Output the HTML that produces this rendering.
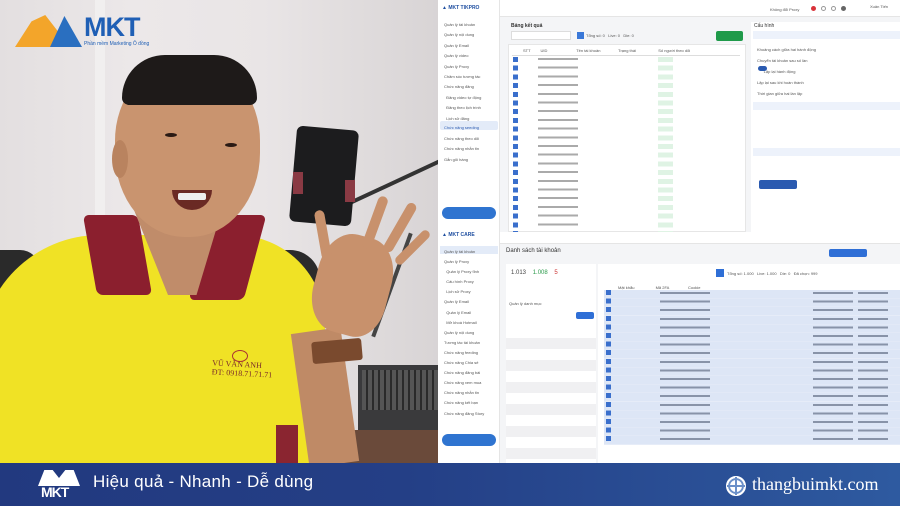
<!DOCTYPE html>
<html><head><meta charset="utf-8"><style>
*{margin:0;padding:0;box-sizing:border-box}
body{width:900px;height:506px;overflow:hidden;position:relative;font-family:"Liberation Sans","Noto Sans CJK SC",sans-serif;background:#e9e5e6}
.a{position:absolute}
.t{position:absolute;font-size:4px;color:#555;white-space:nowrap}
</style></head><body>
<!-- photo background -->
<div class="a" style="left:0;top:0;width:440px;height:465px;background:linear-gradient(90deg,#e3dfe0 0,#ece8e9 30%,#e9e5e6 60%,#d8d4d5 100%)"></div>
<div class="a" style="left:95px;top:0;width:10px;height:250px;background:#f1efef"></div>
<!-- chair -->
<div class="a" style="left:0;top:250px;width:40px;height:40px;background:#2a2a2a;border-radius:0 20px 0 0"></div>
<div class="a" style="left:230px;top:250px;width:90px;height:70px;background:#2b2b2b;border-radius:30px 30px 0 0"></div>
<!-- mic arm -->
<div class="a" style="left:340px;top:180px;width:110px;height:4px;background:#333;transform:rotate(-25deg)"></div>
<div class="a" style="left:390px;top:230px;width:4px;height:110px;background:#444;transform:rotate(20deg)"></div>
<!-- phone -->
<div class="a" style="left:293px;top:128px;width:62px;height:96px;background:#1c1c1e;border-radius:6px;transform:rotate(5deg)"></div>
<div class="a" style="left:293px;top:172px;width:10px;height:22px;background:#8a3a44"></div>
<div class="a" style="left:345px;top:180px;width:10px;height:22px;background:#8a3a44"></div>
<!-- keyboard / desk -->
<div class="a" style="left:358px;top:365px;width:82px;height:100px;background:#3a3a3c"></div>
<div class="a" style="left:362px;top:370px;width:78px;height:40px;background:repeating-linear-gradient(90deg,#555 0 4px,#2a2a2a 4px 6px)"></div>
<div class="a" style="left:340px;top:430px;width:100px;height:35px;background:#6a4a3a"></div>
<!-- shirt -->
<div class="a" style="left:-20px;top:235px;width:345px;height:240px;background:#f0e225;border-radius:120px 90px 0 0"></div>
<div class="a" style="left:276px;top:425px;width:22px;height:40px;background:#8a2530"></div>
<!-- collar -->
<div class="a" style="left:90px;top:215px;width:55px;height:80px;background:#8b1f2e;transform:skewX(10deg);border-radius:6px"></div>
<div class="a" style="left:200px;top:215px;width:55px;height:85px;background:#8b1f2e;transform:skewX(-15deg);border-radius:6px"></div>
<!-- neck -->
<div class="a" style="left:130px;top:200px;width:95px;height:95px;background:#c08c6a;clip-path:polygon(0 0,100% 0,70% 100%,40% 100%)"></div>
<!-- head -->
<div class="a" style="left:115px;top:62px;width:145px;height:175px;background:#c9946f;border-radius:45% 45% 48% 48%"></div>
<div class="a" style="left:122px;top:55px;width:135px;height:50px;background:#1e1a19;border-radius:60px 60px 10px 10px"></div>
<div class="a" style="left:112px;top:140px;width:16px;height:38px;background:#b9835f;border-radius:50%"></div>
<div class="a" style="left:172px;top:190px;width:40px;height:20px;background:#6a2a24;border-radius:0 0 20px 20px"></div>
<div class="a" style="left:178px;top:193px;width:28px;height:7px;background:#eee;border-radius:2px"></div>
<div class="a" style="left:165px;top:133px;width:12px;height:4px;background:#2a1a14;border-radius:50%"></div>
<div class="a" style="left:225px;top:143px;width:12px;height:4px;background:#2a1a14;border-radius:50%"></div>
<!-- hand & arm -->
<div class="a" style="left:300px;top:330px;width:50px;height:135px;background:#bf8a66;transform:rotate(-8deg)"></div>
<div class="a" style="left:315px;top:235px;width:75px;height:100px;background:#c8916c;border-radius:40% 40% 35% 40%;transform:rotate(15deg)"></div>
<div class="a" style="left:318px;top:210px;width:10px;height:50px;background:#c8916c;border-radius:5px;transform:rotate(-10deg)"></div>
<div class="a" style="left:370px;top:195px;width:10px;height:55px;background:#c8916c;border-radius:5px;transform:rotate(20deg)"></div>
<div class="a" style="left:395px;top:200px;width:10px;height:55px;background:#c8916c;border-radius:5px;transform:rotate(30deg)"></div>
<div class="a" style="left:408px;top:225px;width:9px;height:45px;background:#c8916c;border-radius:5px;transform:rotate(45deg)"></div>
<div class="a" style="left:312px;top:340px;width:50px;height:22px;background:#7a4a2e;border-radius:3px;transform:rotate(-5deg)"></div>
<!-- shirt logo text -->
<div class="a" style="left:212px;top:360px;font-size:8px;color:#7a2a2a;font-family:'Liberation Serif',serif;transform:rotate(3deg)">VŨ VĂN ANH<br>ĐT: 0918.71.71.71</div>
<div class="a" style="left:232px;top:350px;width:16px;height:12px;border:1px solid #a33;border-radius:50%"></div>
<!-- top logo -->
<div class="a" style="left:15px;top:15px;width:55px;height:32px;background:#f3a52a;clip-path:polygon(0 100%,30% 20%,55% 0,100% 100%)"></div>
<div class="a" style="left:50px;top:16px;width:32px;height:31px;background:#2a6fc0;clip-path:polygon(0 100%,45% 0,100% 100%)"></div>
<div class="a" style="left:84px;top:12px;font:bold 27px 'Liberation Sans',sans-serif;color:#1f5fb5;letter-spacing:-1px">MKT</div>
<div class="a" style="left:84px;top:41px;font-size:5px;color:#1f5fb5">Phần mềm Marketing Ô đồng</div>

<!-- TOP SOFTWARE -->
<div class="a" style="left:438px;top:0;width:462px;height:232px;background:#f4f5f7;overflow:hidden">
 <div class="a" style="left:0;top:0;width:62px;height:232px;background:#fff;border-right:1px solid #e5e5e5"></div>
 <div class="a" style="left:62px;top:0;width:400px;height:17px;background:#fff;border-bottom:1px solid #e5e5e5"></div>
 <div class="a" style="left:4px;top:5px;font:bold 5px 'Liberation Sans';color:#1f4fa0">▲ MKT TIKPRO</div>
 <div class="t" style="left:6px;top:20px;line-height:10.4px">Quản lý tài khoản<br>Quản lý nội dung<br>Quản lý Email<br>Quản lý video<br>Quản lý Proxy<br>Chăm sóc tương tác<br>Chức năng đăng<br>&nbsp; Đăng video tự động<br>&nbsp; Đăng theo lịch trình<br>&nbsp; Lịch sử đăng</div>
 <div class="a" style="left:2px;top:121px;width:58px;height:9px;background:#e3ebf8;border-radius:2px"></div>
 <div class="t" style="left:6px;top:123px;line-height:10.4px;color:#2a5ab0">Chức năng seeding</div>
 <div class="t" style="left:6px;top:134px;line-height:10.4px">Chức năng theo dõi<br>Chức năng nhắn tin<br>Gắn giỏ hàng</div>
 <div class="a" style="left:4px;top:207px;width:54px;height:12px;background:#2f74d0;border-radius:7px"></div>
 <div class="t" style="left:332px;top:7px">Không đổi Proxy</div>
 <div class="a" style="left:373px;top:6px;width:5px;height:5px;background:#d9333a;border-radius:50%"></div>
 <div class="a" style="left:383px;top:6px;width:5px;height:5px;border:1px solid #999;border-radius:50%"></div>
 <div class="a" style="left:393px;top:6px;width:5px;height:5px;border:1px solid #999;border-radius:50%"></div>
 <div class="a" style="left:403px;top:6px;width:5px;height:5px;background:#666;border-radius:50%"></div>
 <div class="t" style="left:432px;top:4px">Xuân Tiến</div>
 <div class="t" style="left:73px;top:23px;font-size:5px;color:#333;font-weight:bold">Bảng kết quả</div>
 <div class="a" style="left:73px;top:31px;width:60px;height:9px;background:#fff;border:1px solid #ddd"></div>
 <div class="a" style="left:139px;top:32px;width:7px;height:7px;background:#3a78d8"></div>
 <div class="t" style="left:148px;top:33px">Tổng số: 0 &nbsp; Live: 0 &nbsp; Die: 0</div>
 <div class="a" style="left:278px;top:31px;width:27px;height:10px;background:#1f9a4a;border-radius:2px"></div>
 <div class="a" style="left:70px;top:44px;width:238px;height:188px;background:#fff;border:1px solid #e6e6e6"></div>
 <div class="a" style="left:74px;top:48px;width:228px;height:8px;border-bottom:1px solid #ddd"></div>
 <div class="t" style="left:85px;top:48px">STT &nbsp;&nbsp;&nbsp;&nbsp;&nbsp;&nbsp;&nbsp; UID &nbsp;&nbsp;&nbsp;&nbsp;&nbsp;&nbsp;&nbsp;&nbsp;&nbsp;&nbsp;&nbsp;&nbsp;&nbsp;&nbsp;&nbsp;&nbsp;&nbsp;&nbsp;&nbsp;&nbsp;&nbsp;&nbsp;&nbsp;&nbsp; Tên tài khoản &nbsp;&nbsp;&nbsp;&nbsp;&nbsp;&nbsp;&nbsp;&nbsp;&nbsp;&nbsp;&nbsp;&nbsp;&nbsp;&nbsp; Trạng thái &nbsp;&nbsp;&nbsp;&nbsp;&nbsp;&nbsp;&nbsp;&nbsp;&nbsp;&nbsp;&nbsp;&nbsp;&nbsp;&nbsp;&nbsp;&nbsp;&nbsp;&nbsp; Số người theo dõi</div>
 <div class="a" style="left:75px;top:57px;width:5px;height:175px;background:repeating-linear-gradient(180deg,#3a6fcc 0 5px,transparent 5px 8.7px)"></div>
 <div class="a" style="left:220px;top:57px;width:15px;height:175px;background:repeating-linear-gradient(180deg,#dff3e4 0 5px,transparent 5px 8.7px)"></div>
 <div class="a" style="left:100px;top:58px;width:40px;height:175px;background:repeating-linear-gradient(180deg,#aaa 0 2px,transparent 2px 8.7px)"></div>
 <!-- right config -->
 <div class="a" style="left:313px;top:22px;width:149px;height:210px;background:#fff"></div>
 <div class="t" style="left:316px;top:23px;font-size:5px;color:#333">Cấu hình</div>
 <div class="a" style="left:315px;top:31px;width:147px;height:8px;background:#edf2fb"></div>
 <div class="a" style="left:315px;top:102px;width:147px;height:8px;background:#edf2fb"></div>
 <div class="a" style="left:315px;top:148px;width:147px;height:8px;background:#edf2fb"></div>
 <div class="t" style="left:319px;top:44px;line-height:11px">Khoảng cách giữa hai hành động<br>Chuyển tài khoản sau số lần<br>&nbsp;&nbsp;&nbsp;&nbsp;&nbsp; Lặp lại hành động<br>Lặp lại sau khi hoàn thành<br>Thời gian giữa hai lần lặp</div>
 <div class="a" style="left:320px;top:66px;width:9px;height:5px;background:#2a5ab0;border-radius:3px"></div>
 <div class="a" style="left:321px;top:180px;width:38px;height:9px;background:#2a5ab0;border-radius:2px"></div>
</div>

<!-- BOTTOM SOFTWARE -->
<div class="a" style="left:438px;top:232px;width:462px;height:233px;background:#f4f5f7;overflow:hidden">
 <div class="a" style="left:0;top:0;width:62px;height:233px;background:#fff;border-right:1px solid #e5e5e5"></div>
 <div class="a" style="left:62px;top:0;width:400px;height:12px;background:#fff;border-bottom:1px solid #e5e5e5"></div>
 <div class="a" style="left:4px;top:0;font:bold 5px 'Liberation Sans';color:#1f4fa0">▲ MKT CARE</div>
 <div class="a" style="left:2px;top:14px;width:58px;height:8px;background:#e3ebf8"></div>
 <div class="t" style="left:6px;top:15px;line-height:10.1px">Quản lý tài khoản<br>Quản lý Proxy<br>&nbsp; Quản lý Proxy tĩnh<br>&nbsp; Cấu hình Proxy<br>&nbsp; Lịch sử Proxy<br>Quản lý Email<br>&nbsp; Quản lý Email<br>&nbsp; Mở khoá Hotmail<br>Quản lý nội dung<br>Tương tác tài khoản<br>Chức năng feeding<br>Chức năng Chia sẻ<br>Chức năng đăng bài<br>Chức năng xem mua<br>Chức năng nhắn tin<br>Chức năng kết bạn<br>Chức năng đăng Story</div>
 <div class="a" style="left:4px;top:202px;width:54px;height:12px;background:#2f74d0;border-radius:7px"></div>
 <div class="t" style="left:68px;top:16px;font-size:6px;color:#333">Danh sách tài khoản</div>
 <div class="a" style="left:391px;top:17px;width:38px;height:8px;background:#2f6fd6;border-radius:2px"></div>
 <div class="a" style="left:68px;top:32px;width:90px;height:201px;background:#fff"></div>
 <div class="t" style="left:73px;top:38px;font-size:6px;color:#444">1.013 &nbsp;&nbsp; <span style="color:#2a9a4a">1.008</span> &nbsp;&nbsp; <span style="color:#c33">5</span></div>
 <div class="t" style="left:71px;top:69px">Quản lý danh mục</div>
 <div class="a" style="left:138px;top:80px;width:18px;height:7px;background:#2f6fd6;border-radius:2px"></div>
 <div class="a" style="left:68px;top:95px;width:90px;height:140px;background:repeating-linear-gradient(180deg,#fff 0 11px,#f0f0f2 11px 22px)"></div>
 <div class="a" style="left:160px;top:32px;width:302px;height:201px;background:#fff"></div>
 <div class="a" style="left:278px;top:37px;width:8px;height:8px;background:#2f6fd6"></div>
 <div class="t" style="left:289px;top:39px">Tổng số: 1.000 &nbsp; Live: 1.000 &nbsp; Die: 0 &nbsp; Đã chọn: 999</div>
 <div class="t" style="left:180px;top:53px">Mật khẩu &nbsp;&nbsp;&nbsp;&nbsp;&nbsp;&nbsp;&nbsp;&nbsp;&nbsp;&nbsp;&nbsp;&nbsp;&nbsp;&nbsp;&nbsp;&nbsp;&nbsp; Mã 2FA &nbsp;&nbsp;&nbsp;&nbsp;&nbsp;&nbsp;&nbsp;&nbsp;&nbsp;&nbsp;&nbsp;&nbsp;&nbsp;&nbsp;&nbsp; Cookie</div>
 <div class="a" style="left:166px;top:58px;width:296px;height:155px;background:repeating-linear-gradient(180deg,#dde6f6 0 8px,#e6ecf8 8px 8.6px)"></div>
 <div class="a" style="left:168px;top:58px;width:5px;height:155px;background:repeating-linear-gradient(180deg,#3a6fcc 0 5px,transparent 5px 8.6px)"></div>
 <div class="a" style="left:222px;top:60px;width:50px;height:155px;background:repeating-linear-gradient(180deg,#8893a8 0 2px,transparent 2px 8.6px)"></div>
 <div class="a" style="left:375px;top:60px;width:40px;height:155px;background:repeating-linear-gradient(180deg,#8893a8 0 2px,transparent 2px 8.6px)"></div>
 <div class="a" style="left:420px;top:60px;width:30px;height:155px;background:repeating-linear-gradient(180deg,#8893a8 0 2px,transparent 2px 8.6px)"></div>
</div>

<!-- BOTTOM BAR -->
<div class="a" style="left:0;top:463px;width:900px;height:43px;background:linear-gradient(90deg,#22397f 0,#243f86 45%,#2e5aa0 100%)"></div>
<div class="a" style="left:38px;top:470px;width:42px;height:16px;background:#fff;clip-path:polygon(0 100%,15% 0,35% 0,50% 50%,65% 0,85% 0,100% 100%)"></div>
<div class="a" style="left:41px;top:484px;font:bold 14px 'Liberation Sans',sans-serif;color:#fff;letter-spacing:-1px">MKT</div>
<div class="a" style="left:93px;top:472px;font-size:17px;color:#fff;letter-spacing:0.3px">Hiệu quả - Nhanh - Dễ dùng</div>
<div class="a" style="left:726px;top:476px;width:20px;height:20px;border-radius:50%;background:#fff;border:2px solid #fff;box-shadow:inset 0 0 0 2px #6a8fc8"></div>
<div class="a" style="left:735px;top:477px;width:2px;height:18px;background:#6a8fc8"></div>
<div class="a" style="left:727px;top:485px;width:18px;height:2px;background:#6a8fc8"></div>
<div class="a" style="left:752px;top:474px;font:18px 'Liberation Serif',serif;color:#fff">thangbuimkt.com</div>
</body></html>
